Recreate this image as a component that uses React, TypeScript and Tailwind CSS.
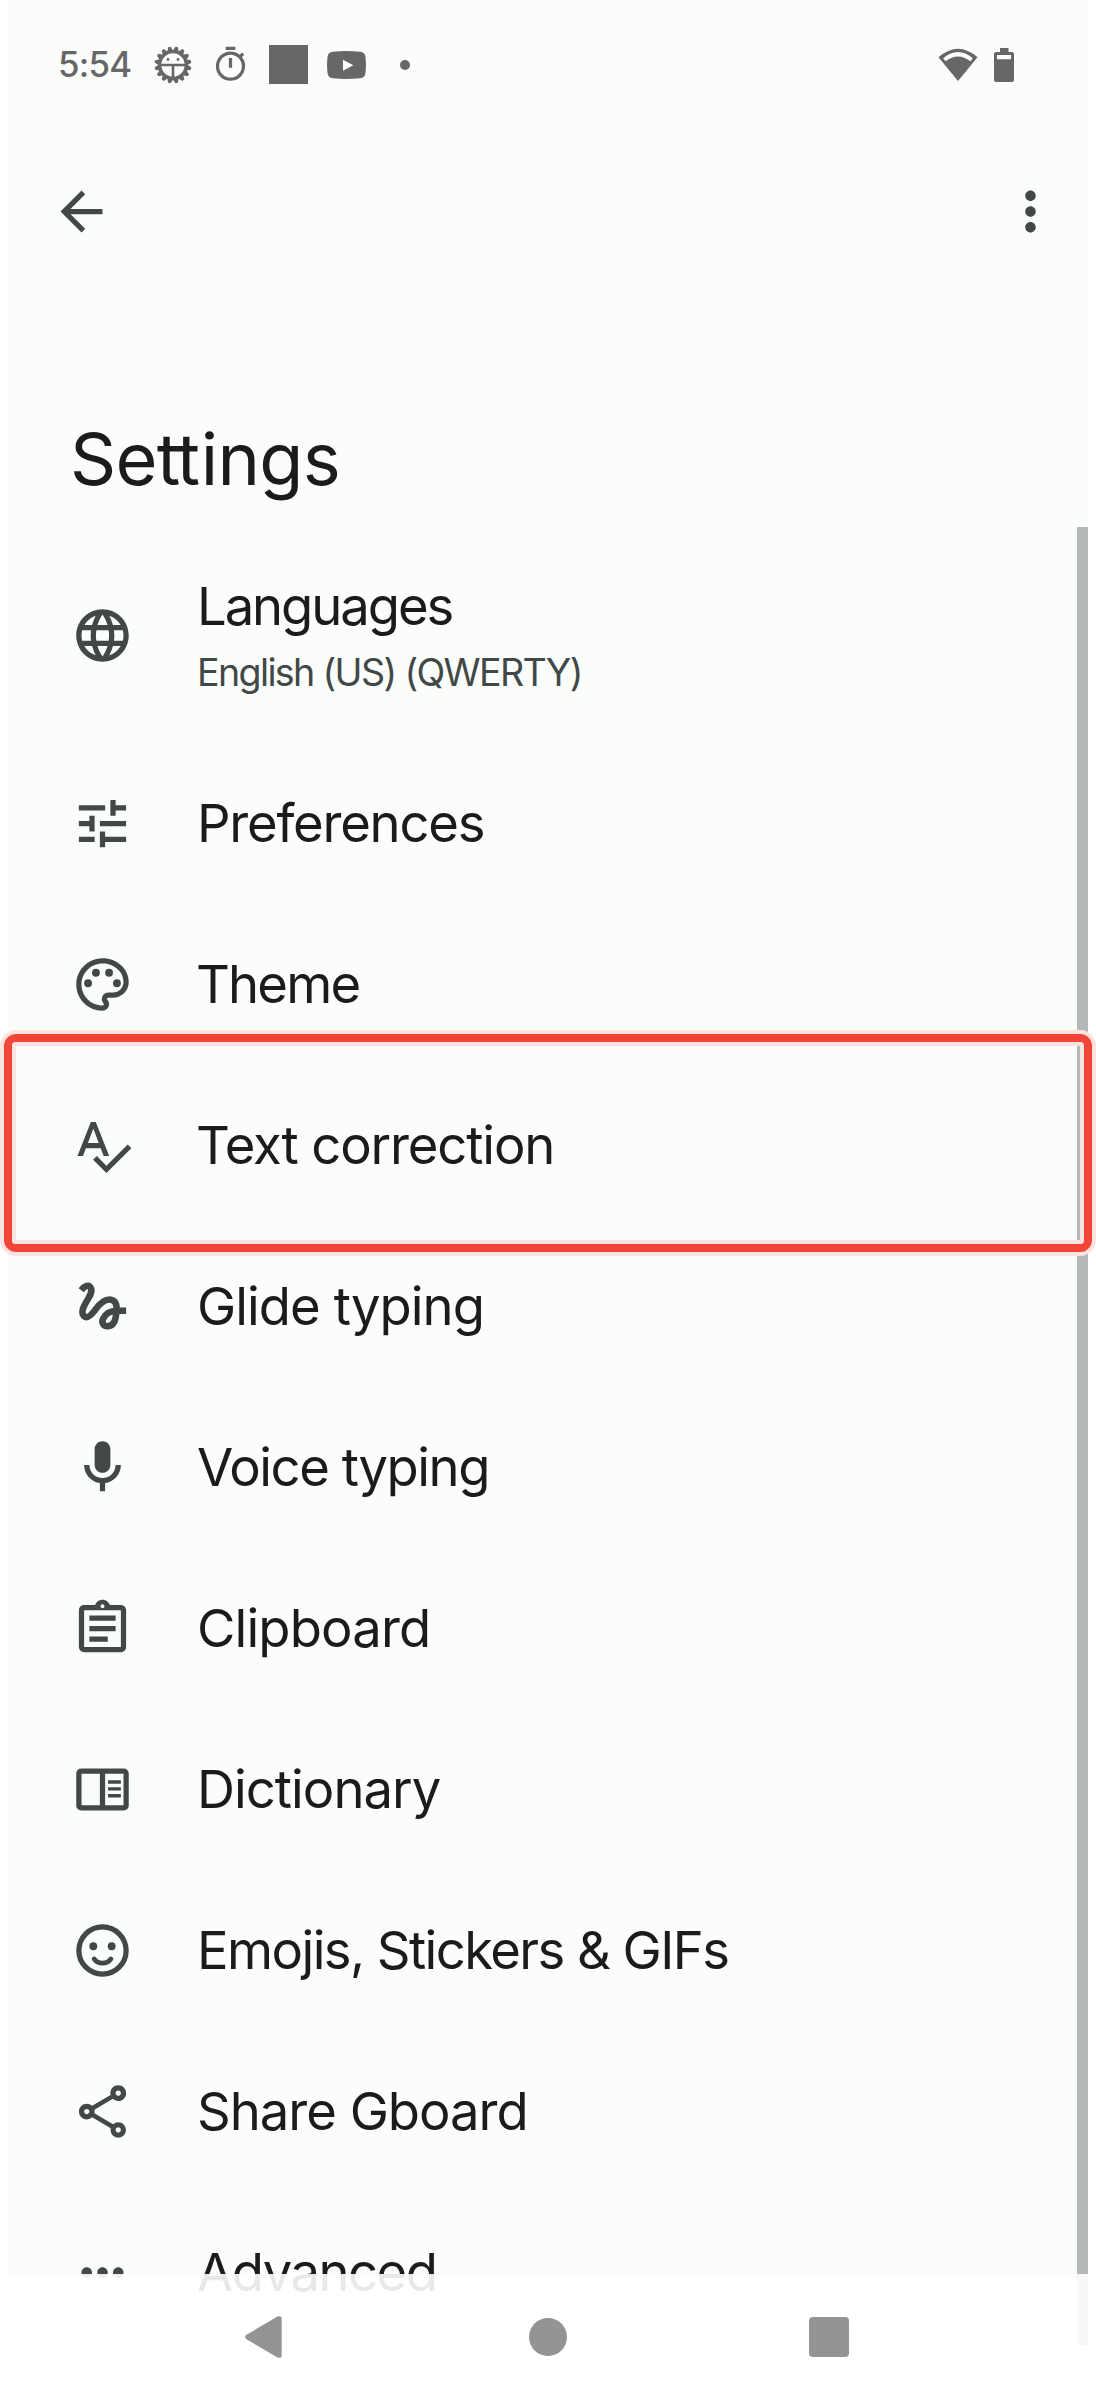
import React from "react";
import type { ReactNode } from "react";
import {
  MdArrowBack,
  MdLanguage,
  MdMoreHoriz,
  MdMoreVert,
  MdOutlineAssignment,
  MdOutlinePalette,
  MdOutlineShare,
  MdOutlineTimer,
  MdTune,
} from "react-icons/md";

const ICON = "size-[63px] shrink-0";

function Spellcheck() {
  return (
    <svg viewBox="0 0 24 24" className={ICON} fill="currentColor">
      <path d="M12.45 16h2.09L9.43 3H7.57L2.46 16h2.09l1.12-3h5.64l1.14 3zm-6.02-5L8.5 5.48 10.57 11H6.43zm15.16.59-8.09 8.09L9.83 16l-1.41 1.41 5.09 5.09L23 13l-1.41-1.41z" />
    </svg>
  );
}

function Glide() {
  return (
    <svg viewBox="0 0 24 24" className={ICON} fill="none" stroke="currentColor" strokeWidth="2.5">
      <path d="M3.9 5.8C4.9 4.4 6.6 3.4 7.5 4.8C8.5 6.5 6.6 8.8 5.4 11C4.2 13.2 4.1 15 5.1 15.8C6.3 16.7 7.8 15.1 9.2 13.3C10.8 11.1 13 9.1 15.2 9.4C17.7 9.8 17.5 12.5 17.2 15C16.9 17.8 15.8 19.5 13.9 19.5C12.2 19.5 11.6 18.1 12.2 16.7C13.1 14.7 15 13.6 17.5 13.6H21" />
    </svg>
  );
}

function Mic() {
  return (
    <svg viewBox="0 0 24 24" className={ICON} fill="currentColor">
      <path d="M12 14c1.66 0 3-1.34 3-3V5c0-1.66-1.34-3-3-3S9 3.34 9 5v6c0 1.66 1.34 3 3 3zm5-3c0 2.76-2.24 5-5 5s-5-2.24-5-5H5c0 3.53 2.61 6.43 6 6.92V21h2v-3.08c3.39-.49 6-3.39 6-6.92h-2z" />
    </svg>
  );
}

function Book() {
  return (
    <svg viewBox="0 0 24 24" className={ICON} fill="none" stroke="currentColor" strokeWidth="2">
      <rect x="3" y="5" width="18" height="14" rx="0.9" />
      <path d="M12 5v14" />
      <path d="M14.1 9.15h4.9M14.1 11.75h4.9M14.1 14.35h4.9" strokeWidth="1.3" />
    </svg>
  );
}

function Smile() {
  return (
    <svg viewBox="0 0 24 24" className={ICON} fill="none" stroke="currentColor">
      <circle cx="12" cy="12" r="9" strokeWidth="2" />
      <circle cx="8.5" cy="10.4" r="1.5" fill="currentColor" stroke="none" />
      <circle cx="15.5" cy="10.4" r="1.5" fill="currentColor" stroke="none" />
      <path d="M8.8 15.2c.7 1 1.9 1.600 3.200 1.600s2.500-.6 3.200-1.600" strokeWidth="1.800" strokeLinecap="round" />
    </svg>
  );
}

function BugGear() {
  const teeth = Array.from({ length: 16 }, (_, i) => i * 22.5 + 11.25);
  return (
    <svg viewBox="-20 -20 40 40" className="size-10">
      {teeth.map((a) => (
        <path key={a} d="M-3.200 -13.500L-1.300 -18.400H1.300L3.200 -13.500Z" transform={`rotate(${a})`} fill="currentColor" />
      ))}
      <circle r="13.200" fill="none" stroke="currentColor" strokeWidth="3" />
      <path d="M-13 0H13M0 0V13" stroke="currentColor" strokeWidth="2.600" />
      <circle cx="-5" cy="-5.500" r="1.400" fill="currentColor" />
      <circle cx="5" cy="-5.500" r="1.400" fill="currentColor" />
    </svg>
  );
}

function StatusBar() {
  return (
    <div className="flex h-[129px] items-center pl-[50px] pr-[74px] text-[#666766]">
      <span className="w-[95px] text-[34.800px] font-medium tracking-[-0.8px]">5:54</span>
      <BugGear />
      <MdOutlineTimer className="ml-[18px] size-[39px]" />
      <div className="ml-[19px] size-[39px] bg-current" />
      <svg viewBox="0 0 39 28" className="ml-[19px] h-7 w-[39px]">
        <path
          fill="currentColor"
          fillRule="evenodd"
          d="M6 .8Q19.500-.6 33 .8Q38 1 38.500 6Q39.400 14 38.500 22Q38 27 33 27.200Q19.500 28.600 6 27.200Q1 27 .5 22Q-.4 14 .5 6Q1 1 6 .8ZM16 8.700V19.700L26.300 14.200Z"
        />
      </svg>
      <div className="ml-[34px] size-2.5 rounded-full bg-current" />
      <svg viewBox="0 0 40 34" className="ml-auto mr-[16px] h-[34px] w-10">
        <path
          fill="currentColor"
          fillRule="evenodd"
          d="M.500 9.300Q20-7.700 39.500 9.300L20 33ZM5.200 10.300L7.600 13.300Q20 3.700 32.400 13.300L34.800 10.300Q20-2.300 5.200 10.300Z"
        />
      </svg>
      <svg viewBox="0 0 20 34" className="h-[34px] w-5">
        <path
          fill="currentColor"
          fillRule="evenodd"
          d="M6 0h8.500v4H18q2 0 2 2v26q0 2-2 2H2q-2 0-2-2V6q0-2 2-2h4ZM3 7v4.200h14V7Z"
        />
      </svg>
    </div>
  );
}

function Row({ icon, children }: { icon: ReactNode; children: ReactNode }) {
  return (
    <li className="flex h-[161px] shrink-0 items-center gap-[63px] pl-[63px] text-[#414847]">
      {icon}
      <div className="whitespace-nowrap pb-0.5 text-[52.6px] leading-[66px] text-[#1a1c1b]">{children}</div>
    </li>
  );
}

export default function App() {
  return (
    <div className="relative h-[2400px] w-[1096px] overflow-hidden bg-white font-['Inter',sans-serif]">
      <div className="mx-2 flex h-full flex-col bg-[#fbfdfa]">
        <StatusBar />
        <header className="flex h-[165px] items-center justify-between pl-[42px] pr-[26px] text-[#414847]">
          <MdArrowBack className={ICON} />
          <MdMoreVert className={ICON} />
        </header>
        <h1 className="mt-[120px] h-[113px] pl-[62px] text-[72px] leading-[90px] tracking-[-0.7px] text-[#1a1c1b]">
          Se<span className="tracking-[-3.800px]">t</span>
          <span className="tracking-[0.6px]">t</span>ings
        </h1>
        <main className="relative min-h-0 flex-1 overflow-hidden">
          <ul className="flex flex-col">
            <li className="flex h-[216px] shrink-0 items-center gap-[63px] pl-[63px] text-[#414847]">
              <MdLanguage className={ICON} />
              <div className="whitespace-nowrap pt-[9px]">
                <div className="text-[52.6px] leading-[66px] tracking-[-2.080px] text-[#1a1c1b]">Languages</div>
                <div className="text-[37.600px] leading-[67px] tracking-[-1.640px]">English (US) (QWERTY)</div>
              </div>
            </li>
            <Row icon={<MdTune className={ICON} />}>
              <span className="tracking-[-1.250px]">Preferences</span>
            </Row>
            <Row icon={<MdOutlinePalette className={ICON} />}>
              <span className="-ml-px tracking-[-1.850px]">Theme</span>
            </Row>
            <Row icon={<Spellcheck />}>
              <span className="-ml-px tracking-[-1.150px]">Text correction</span>
            </Row>
            <Row icon={<Glide />}>
              <span className="tracking-[-0.950px]">Glide typing</span>
            </Row>
            <Row icon={<Mic />}>
              <span className="tracking-[-1.450px]">Voice typing</span>
            </Row>
            <Row icon={<MdOutlineAssignment className={ICON} />}>
              <span className="tracking-[-0.850px]">Clipboard</span>
            </Row>
            <Row icon={<Book />}>
              <span className="tracking-[-0.970px]">Dictionary</span>
            </Row>
            <Row icon={<Smile />}>
              <span className="tracking-[-1.580px]">Emojis, Stickers &amp; GIFs</span>
            </Row>
            <Row icon={<MdOutlineShare className={ICON} />}>
              <span className="tracking-[-1.020px]">Share Gboard</span>
            </Row>
            <Row icon={<MdMoreHoriz className={ICON} />}>
              <span className="tracking-[-1.530px]">Advanced</span>
            </Row>
          </ul>
          <div className="absolute right-0 top-0 h-[1818px] w-[11px] bg-[#b4b9b7]" />
        </main>
      </div>

      <div className="absolute inset-x-0 top-[1030px] h-[226px] rounded-2xl border-4 border-[#fee3e1]">
        <div className="h-full rounded-xl border-8 border-[#f14537]">
          <div className="h-full rounded-[4px] border-4 border-[#fee3e1]" />
        </div>
      </div>

      <nav className="absolute inset-x-0 bottom-0 flex h-[126px] items-center bg-white/90 pl-[245px] text-[#949494]">
        <svg viewBox="0 0 37 42" className="h-[42px] w-[37px]" fill="currentColor">
          <path d="M1.500 18.800L32.500.500Q36.700-.9 36.700 3V39Q36.700 42.900 32.500 41.500L1.500 23.200Q-1.300 21 1.500 18.800Z" />
        </svg>
        <div className="ml-[247px] size-[38px] rounded-full bg-current" />
        <div className="ml-[242px] size-10 rounded-[4px] bg-current" />
      </nav>
    </div>
  );
}
